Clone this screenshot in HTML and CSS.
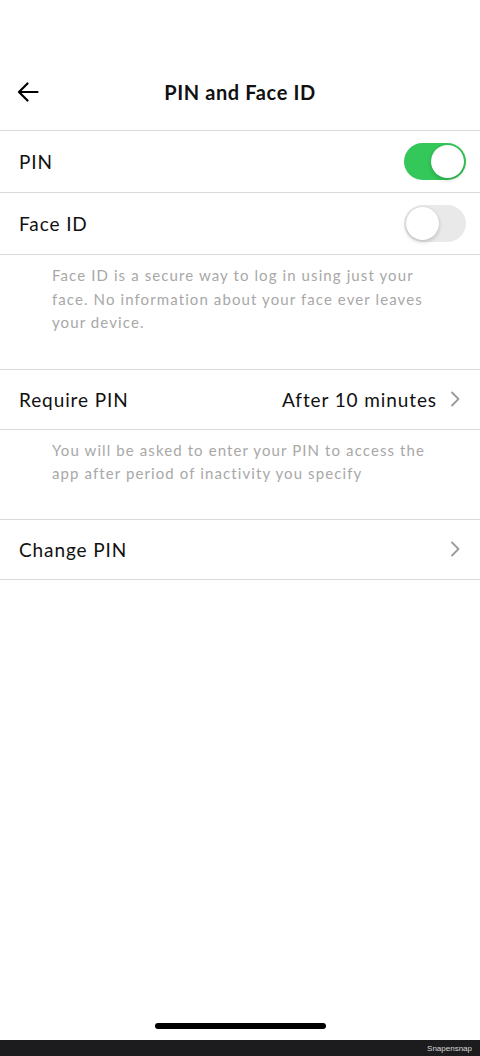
FILE: index.html
```html
<!DOCTYPE html>
<html lang="en">
<head>
    <meta charset="UTF-8">
    <meta name="viewport" content="width=device-width, initial-scale=1.0">
    <title>PIN and Face ID</title>
    <link rel="stylesheet" href="styles.css">
</head>
<body>
    <div class="screen">
        <div class="status-space"></div>

        <div class="header">
            <button class="back" aria-label="Back">
                <svg width="22" height="20" viewBox="0 0 22 20">
                    <path d="M20.5 10H2M10.5 1.5L2 10l8.5 8.5" fill="none" stroke="#000" stroke-width="2.2" stroke-linecap="round" stroke-linejoin="round"/>
                </svg>
            </button>
            <h1>PIN and Face ID</h1>
        </div>

        <div class="row">
            <span class="label">PIN</span>
            <span class="toggle on"><span class="knob"></span></span>
        </div>
        <div class="row">
            <span class="label">Face ID</span>
            <span class="toggle"><span class="knob"></span></span>
        </div>
        <p class="note">Face ID is a secure way to log in using just your face. No information about your face ever leaves your device.</p>

        <div class="row row-link">
            <span class="label">Require PIN</span>
            <span class="value">After 10 minutes</span>
            <svg class="chevron" width="10" height="16" viewBox="0 0 10 16">
                <path d="M2 1.5L8.5 8 2 14.5" fill="none" stroke="#9a9a9a" stroke-width="1.8" stroke-linecap="round" stroke-linejoin="round"/>
            </svg>
        </div>
        <p class="note note-short">You will be asked to enter your PIN to access the app after period of inactivity you specify</p>

        <div class="row row-link">
            <span class="label">Change PIN</span>
            <svg class="chevron" width="10" height="16" viewBox="0 0 10 16">
                <path d="M2 1.5L8.5 8 2 14.5" fill="none" stroke="#9a9a9a" stroke-width="1.8" stroke-linecap="round" stroke-linejoin="round"/>
            </svg>
        </div>

        <div class="spacer"></div>
        <div class="home-indicator"></div>
    </div>
    <div class="watermark">Snapensnap</div>
</body>
</html>
```

FILE: styles.css
```css
body {
    margin: 0;
    font-family: Lato, "Noto Sans", sans-serif;
    background: #ffffff;
    color: #111111;
}
.screen {
    height: 1040px;
    display: flex;
    flex-direction: column;
}
.status-space {
    height: 60px;
}
.header {
    height: 70px;
    display: flex;
    align-items: center;
    justify-content: center;
    position: relative;
    border-bottom: 1px solid #dadada;
}
.header h1 {
    margin: 0 0 6px;
    font-size: 20px;
    font-weight: 700;
    letter-spacing: 0.6px;
}
.back {
    position: absolute;
    left: 17px;
    top: 22px;
    background: none;
    border: none;
    padding: 0;
    display: flex;
}
.row {
    height: 61px;
    display: flex;
    align-items: center;
    padding: 0 14px 0 19px;
    border-bottom: 1px solid #dadada;
    font-size: 19px;
    letter-spacing: 0.9px;
}
.row .label {
    flex: 1;
}
.row-link {
    height: 59px;
    padding-right: 20px;
}
.row-link .value {
    margin-right: 13px;
}
.toggle {
    width: 62px;
    height: 37px;
    border-radius: 19px;
    background: #e9e9ea;
    position: relative;
    box-sizing: border-box;
}
.toggle.on {
    background: #34c759;
}
.knob {
    position: absolute;
    top: 2px;
    left: 2px;
    width: 33px;
    height: 33px;
    border-radius: 50%;
    background: #ffffff;
    box-shadow: 0 2px 4px rgba(0,0,0,0.18), 0 0 1px rgba(0,0,0,0.12);
}
.toggle.on .knob {
    left: 27px;
}
.note {
    margin: 0;
    padding: 9px 50px 34px 52px;
    font-size: 15px;
    line-height: 23.5px;
    letter-spacing: 1.1px;
    color: #a8a8a8;
    border-bottom: 1px solid #dadada;
}
.note-short {
    padding-bottom: 33px;
}
.spacer {
    flex: 1;
}
.home-indicator {
    width: 171px;
    height: 6px;
    border-radius: 3px;
    background: #000000;
    margin: 0 auto 11px;
}
.watermark {
    height: 16px;
    background: #1c1c1e;
    color: #d8d8d8;
    font-family: "Liberation Sans", sans-serif;
    font-size: 8px;
    line-height: 18px;
    text-align: right;
    padding-right: 8px;
}
```
